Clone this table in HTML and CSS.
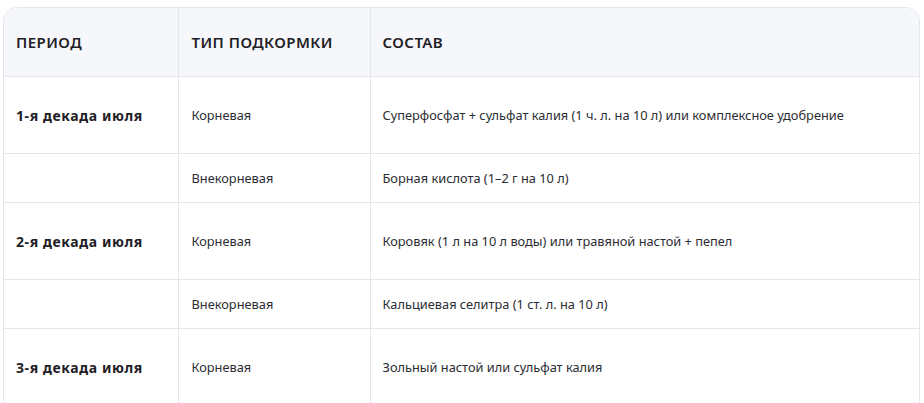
FILE: index.html
```html
<!DOCTYPE html>
<html lang="ru">
<head>
<meta charset="utf-8">
<link rel="stylesheet" href="styles.css">
</head>
<body>
<div class="wrap">
<table class="tbl">
<colgroup><col class="c1"><col class="c2"><col class="c3"></colgroup>
<thead>
<tr><th>Период</th><th>Тип подкормки</th><th>Состав</th></tr>
</thead>
<tbody>
<tr class="tall"><td class="per">1-я декада июля</td><td>Корневая</td><td>Суперфосфат + сульфат калия (1 ч. л. на 10 л) или комплексное удобрение</td></tr>
<tr class="short"><td class="per"></td><td>Внекорневая</td><td>Борная кислота (1–2 г на 10 л)</td></tr>
<tr class="tall"><td class="per">2-я декада июля</td><td>Корневая</td><td>Коровяк (1 л на 10 л воды) или травяной настой + пепел</td></tr>
<tr class="short"><td class="per"></td><td>Внекорневая</td><td>Кальциевая селитра (1 ст. л. на 10 л)</td></tr>
<tr class="tall"><td class="per">3-я декада июля</td><td>Корневая</td><td>Зольный настой или сульфат калия</td></tr>
</tbody>
</table>
</div>
</body>
</html>
```
FILE: styles.css
```css
html, body { margin: 0; padding: 0; background: #fff; }
body { font-family: "Noto Sans", "Open Sans", sans-serif; color: #24262b; }
.wrap {
  margin: 7px 4px 0 3px;
  border: 1px solid #e4e6ee;
  border-radius: 14px;
  overflow: hidden;
  height: 410px;
}
.tbl { width: 100%; border-collapse: collapse; table-layout: fixed; }
.c1 { width: 174px; }
.c2 { width: 192px; }
.tbl th {
  background: #f6f7fb;
  height: 68px;
  text-align: left;
  font-size: 15px;
  font-weight: 600;
  text-transform: uppercase;
  letter-spacing: 0.45px;
  color: #1f2126;
  padding: 0 12px;
  border-bottom: 1px solid #e4e6ee;
  border-right: 1px solid #e4e6ee;
}
.tbl td {
  font-size: 12.8px;
  color: #2b2d33;
  padding: 0 12px;
  border-bottom: 1px solid #e4e6ee;
  border-right: 1px solid #e4e6ee;
}
.tbl th:last-child, .tbl td:last-child { border-right: none; }
.tbl th:nth-child(2), .tbl td:nth-child(2) { padding-left: 13px; }
.tall td { height: 76px; }
.short td { height: 48px; }
.tbl td.per { font-size: 14px; font-weight: 700; letter-spacing: 0.6px; color: #1f2126; }
```
